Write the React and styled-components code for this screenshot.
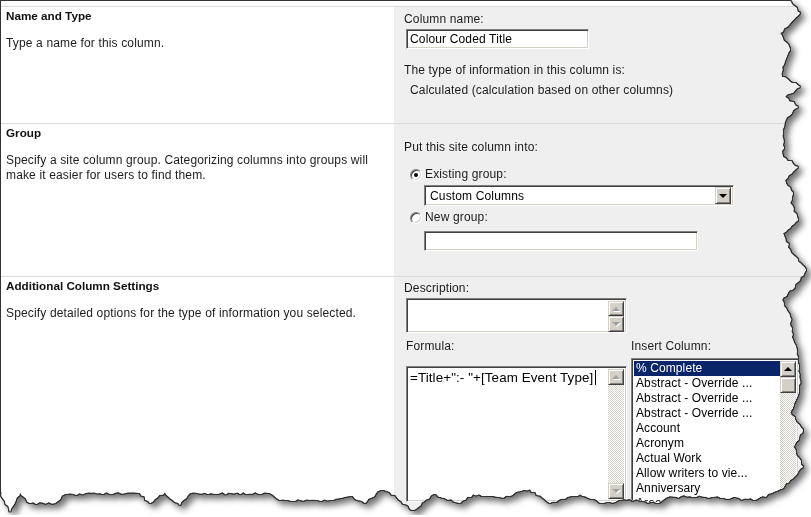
import React from 'react'
import styled, { createGlobalStyle } from 'styled-components'

const GlobalStyle = createGlobalStyle`
  html, body {
    margin: 0;
    background: #fff;
  }
  body {
    font-family: "Liberation Sans", Arial, sans-serif;
  }
`

// rough outline of the torn right and bottom edges (page coordinates)
const edgeKnots = [
  [788, 0], [800, 13], [780, 33], [790, 50], [782, 67], [782, 77], [800, 87],
  [785, 97], [798, 107], [787, 117], [783, 133], [783, 157], [798, 167],
  [785, 180], [793, 193], [790, 203], [798, 220], [783, 233], [790, 250],
  [806, 270], [800, 280], [782, 300], [790, 317], [793, 340], [798, 360],
  [800, 380], [797, 397], [790, 413], [803, 430], [793, 447], [803, 467],
  [790, 480], [783, 488], [757, 499], [690, 496], [667, 497], [657, 503],
  [630, 499], [603, 503], [580, 494], [550, 503], [530, 489], [500, 497],
  [473, 494], [460, 503], [433, 494], [413, 510], [390, 492], [380, 490],
  [365, 503], [350, 496], [330, 500], [280, 500], [270, 493], [190, 493],
  [180, 505], [165, 492], [150, 503], [140, 493], [100, 493], [65, 494],
  [55, 503], [30, 503], [20, 492], [10, 512], [0, 490],
]

function seeded(seed) {
  let s = seed
  return () => {
    s = (s * 16807) % 2147483647
    return s / 2147483647
  }
}

function tornClip() {
  const rnd = seeded(11)
  const pts = ['0px 0px']
  for (let i = 0; i < edgeKnots.length - 1; i++) {
    const [x1, y1] = edgeKnots[i]
    const [x2, y2] = edgeKnots[i + 1]
    const len = Math.hypot(x2 - x1, y2 - y1)
    const steps = Math.max(1, Math.round(len / 3))
    const nx = -(y2 - y1) / len
    const ny = (x2 - x1) / len
    for (let k = 0; k < steps; k++) {
      const t = k / steps
      const j = k === 0 ? 0 : (rnd() - 0.5) * 2.4
      const x = x1 + (x2 - x1) * t + nx * j - 1
      const y = y1 + (y2 - y1) * t + ny * j - 1
      pts.push(`${x.toFixed(1)}px ${y.toFixed(1)}px`)
    }
  }
  pts.push('-1px 489px')
  return `polygon(${pts.join(', ')})`
}

const clip = tornClip()

const Stage = styled.div`
  padding: 1px 0 0 1px;
  filter: drop-shadow(1px 0 0 #333) drop-shadow(-1px 0 0 #333)
    drop-shadow(0 1px 0 #333) drop-shadow(0 -1px 0 #333)
    drop-shadow(4px 4px 3px rgba(0, 0, 0, 0.55));
`

const Sheet = styled.div`
  width: 809px;
  height: 514px;
  box-sizing: border-box;
  padding-top: 5px;
  display: flex;
  flex-direction: column;
  background: #fff;
  color: #1c1c1c;
  font-size: 12px;
  letter-spacing: 0.15px;
  clip-path: ${clip};
`

const Section = styled.section`
  display: grid;
  grid-template-columns: 393px 1fr;
  border-top: 1px solid #dadada;
  box-sizing: border-box;
  height: ${({ $h }) => ($h ? `${$h}px` : 'auto')};
  flex: ${({ $h }) => ($h ? 'none' : '1')};
`

const Info = styled.div`
  padding: 2px 5px 0;
  background: #fff;
`

const Heading = styled.h3`
  margin: 0;
  font-size: 11.7px;
  line-height: 14px;
  font-weight: bold;
  letter-spacing: 0;
  color: #111;
`

const Desc = styled.p`
  margin: 13px 0 0;
  line-height: 15px;
`

const Fields = styled.div`
  background: #efefef;
  padding: ${({ $top }) => $top}px 0 0 10px;
`

const Label = styled.div`
  line-height: 15px;
  margin-top: ${({ $mt }) => $mt || 0}px;
  margin-left: ${({ $ml }) => $ml || 0}px;
`

const inset = `
  box-sizing: border-box;
  background: #fff;
  border: 1px solid;
  border-color: #808080 #fff #fff #808080;
  box-shadow: inset 1px 1px #404040, inset -1px -1px #d4d0c8;
`

const TextBox = styled.div`
  ${inset}
  width: ${({ $w }) => $w}px;
  height: 20px;
  margin-top: ${({ $mt }) => $mt || 0}px;
  margin-left: ${({ $ml }) => $ml}px;
  padding: 2px 3px;
  line-height: 14px;
  color: #000;
`

const RadioRow = styled.div`
  display: flex;
  align-items: center;
  gap: 3px;
  margin: ${({ $mt }) => $mt}px 0 0 6px;
  line-height: 15px;
`

const Radio = styled.span`
  box-sizing: border-box;
  width: 12px;
  height: 12px;
  border-radius: 50%;
  background: #fff;
  border: 1px solid;
  border-color: #808080 #fff #fff #808080;
  box-shadow: inset 1px 1px #404040, inset -1px -1px #d4d0c8;
  display: flex;
  align-items: center;
  justify-content: center;

  &::after {
    content: '';
    width: 4px;
    height: 4px;
    border-radius: 50%;
    background: ${({ $checked }) => ($checked ? '#000' : 'transparent')};
  }
`

const SelectBox = styled.div`
  ${inset}
  display: flex;
  align-items: center;
  width: 310px;
  height: 21px;
  padding: 2px;
  margin: 3px 0 0 20px;
  color: #000;
`

const SelectText = styled.span`
  flex: 1;
  padding-left: 3px;
`

const Button = styled.span`
  box-sizing: border-box;
  width: 16px;
  height: ${({ $h }) => $h || 16}px;
  flex: none;
  background: #d4d0c8;
  border: 1px solid;
  border-color: #d4d0c8 #404040 #404040 #d4d0c8;
  box-shadow: inset 1px 1px #fff, inset -1px -1px #808080;
  display: flex;
  align-items: center;
  justify-content: center;

  &::after {
    content: '';
    display: ${({ $dir }) => ($dir ? 'block' : 'none')};
    width: 0;
    height: 0;
    border-left: 4px solid transparent;
    border-right: 4px solid transparent;
    border-top: ${({ $dir, $off }) => ($dir === 'down' ? `4px solid ${$off ? '#a0a0a0' : '#000'}` : '0')};
    border-bottom: ${({ $dir, $off }) => ($dir === 'up' ? `4px solid ${$off ? '#a0a0a0' : '#000'}` : '0')};
    filter: ${({ $off }) => ($off ? 'drop-shadow(1px 1px 0 #fff)' : 'none')};
  }
`

const ScrollBar = styled.div`
  width: 16px;
  display: flex;
  flex-direction: column;
`

const Track = styled.div`
  flex: 1;
  background: repeating-conic-gradient(#d4d0c8 0 25%, #fff 0 50%) 0 0 / 2px 2px;
`

const TextArea = styled.div`
  ${inset}
  display: flex;
  width: 221px;
  height: ${({ $h }) => $h}px;
  padding: 2px;
  margin-top: ${({ $mt }) => $mt}px;
  margin-left: ${({ $ml }) => $ml || 0}px;
`

const AreaText = styled.div`
  flex: 1;
  padding: 1px 1px;
  font-size: 13.4px;
  line-height: 15px;
  letter-spacing: 0.1px;
  color: #000;
  display: flex;
  align-items: flex-start;
`

const Caret = styled.span`
  width: 1px;
  height: 15px;
  margin-left: 2px;
  background: #000;
`

const BottomRow = styled.div`
  display: flex;
  gap: 4px;
  margin-top: 6px;
`

const Column = styled.div`
  display: flex;
  flex-direction: column;
`

const ListBox = styled.div`
  ${inset}
  display: flex;
  width: 168px;
  height: 160px;
  padding: 2px;
  margin-top: 4px;
`

const Items = styled.div`
  flex: 1;
  color: #000;
  letter-spacing: 0.1px;
`

const Item = styled.div`
  line-height: 15px;
  padding-left: 2px;
  white-space: nowrap;
  background: ${({ $selected }) => ($selected ? '#0a246a' : 'transparent')};
  color: ${({ $selected }) => ($selected ? '#fff' : '#000')};
`

const columns = [
  '% Complete',
  'Abstract - Override ...',
  'Abstract - Override ...',
  'Abstract - Override ...',
  'Account',
  'Acronym',
  'Actual Work',
  'Allow writers to vie...',
  'Anniversary',
  'Area of Library',
]

export default function App() {
  return (
    <>
      <GlobalStyle />
      <Stage>
        <Sheet>
          <Section $h={117}>
            <Info>
              <Heading>Name and Type</Heading>
              <Desc>Type a name for this column.</Desc>
            </Info>
            <Fields $top={5}>
              <Label>Column name:</Label>
              <TextBox $w={183} $mt={2} $ml={2}>Colour Coded Title</TextBox>
              <Label $mt={14}>The type of information in this column is:</Label>
              <Label $mt={5} $ml={6}>Calculated (calculation based on other columns)</Label>
            </Fields>
          </Section>

          <Section $h={153}>
            <Info>
              <Heading>Group</Heading>
              <Desc>
                Specify a site column group. Categorizing columns into groups will
                <br />
                make it easier for users to find them.
              </Desc>
            </Info>
            <Fields $top={16}>
              <Label>Put this site column into:</Label>
              <RadioRow $mt={12}>
                <Radio $checked />
                Existing group:
              </RadioRow>
              <SelectBox>
                <SelectText>Custom Columns</SelectText>
                <Button $dir="down" $h={17} />
              </SelectBox>
              <RadioRow $mt={4}>
                <Radio />
                New group:
              </RadioRow>
              <TextBox $w={274} $mt={6} $ml={20} />
            </Fields>
          </Section>

          <Section>
            <Info>
              <Heading>Additional Column Settings</Heading>
              <Desc>Specify detailed options for the type of information you selected.</Desc>
            </Info>
            <Fields $top={4}>
              <Label>Description:</Label>
              <TextArea $h={35} $mt={2} $ml={2}>
                <AreaText />
                <ScrollBar>
                  <Button $dir="up" $off $h={15} />
                  <Button $dir="down" $off $h={16} />
                </ScrollBar>
              </TextArea>
              <BottomRow>
                <Column>
                  <Label $ml={2}>Formula:</Label>
                  <TextArea $h={136} $mt={12} $ml={2}>
                    <AreaText>
                      =Title+":- "+[Team Event Type]
                      <Caret />
                    </AreaText>
                    <ScrollBar>
                      <Button $dir="up" $off />
                      <Track />
                      <Button $dir="down" $off />
                    </ScrollBar>
                  </TextArea>
                </Column>
                <Column>
                  <Label>Insert Column:</Label>
                  <ListBox>
                    <Items>
                      {columns.map((c, i) => (
                        <Item key={i} $selected={i === 0}>
                          {c}
                        </Item>
                      ))}
                    </Items>
                    <ScrollBar>
                      <Button $dir="up" />
                      <Button $h={16} />
                      <Track />
                    </ScrollBar>
                  </ListBox>
                </Column>
              </BottomRow>
            </Fields>
          </Section>
        </Sheet>
      </Stage>
    </>
  )
}
